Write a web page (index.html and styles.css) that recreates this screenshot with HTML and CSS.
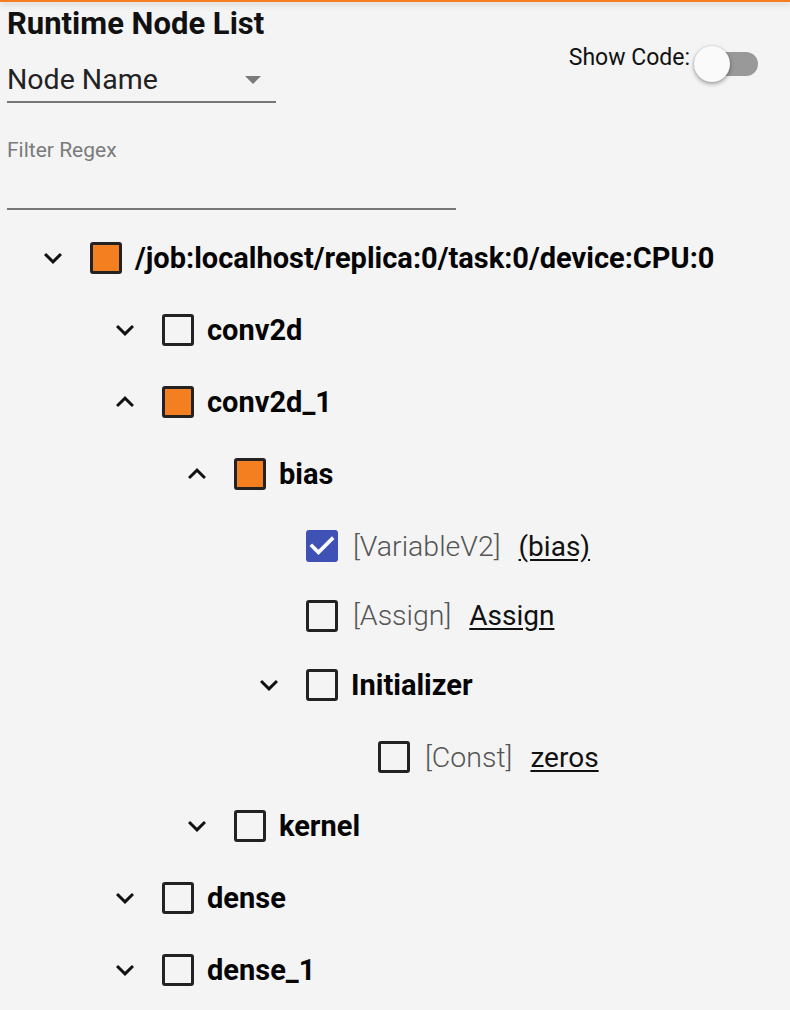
FILE: index.html
```html
<!DOCTYPE html>
<html lang="en">
<head>
<meta charset="utf-8">
<title>Runtime Node List</title>
<link rel="stylesheet" href="styles.css">
</head>
<body>
<div class="topbar"></div>
<main class="page">
  <section class="controls">
    <div class="left">
      <h1 class="title">Runtime Node List</h1>
      <div class="select">
        <span class="select-text">Node Name</span>
        <svg class="select-arrow" viewBox="7 10 10 5" width="18" height="8"><path d="M7 10l5 5 5-5z" fill="#7a7a7a"/></svg>
      </div>
      <label class="filter-label">Filter Regex</label>
      <div class="filter-input"></div>
    </div>
    <div class="right">
      <span class="show-code">Show Code:</span>
      <span class="toggle"><span class="track"></span><span class="knob"></span></span>
    </div>
  </section>

  <section class="tree">
    <div class="row parent d0">
      <svg class="chev" viewBox="0 0 24 24"><path d="M16.59 8.59L12 13.17 7.41 8.59 6 10l6 6 6-6z"/></svg>
      <span class="cb partial"></span>
      <span class="name">/job:localhost/replica:0/task:0/device:CPU:0</span>
    </div>
    <div class="row parent d1">
      <svg class="chev" viewBox="0 0 24 24"><path d="M16.59 8.59L12 13.17 7.41 8.59 6 10l6 6 6-6z"/></svg>
      <span class="cb"></span>
      <span class="name">conv2d</span>
    </div>
    <div class="row parent d1">
      <svg class="chev" viewBox="0 0 24 24"><path d="M12 8l-6 6 1.41 1.41L12 10.83l4.59 4.58L18 14z"/></svg>
      <span class="cb partial"></span>
      <span class="name">conv2d_1</span>
    </div>
    <div class="row parent d2">
      <svg class="chev" viewBox="0 0 24 24"><path d="M12 8l-6 6 1.41 1.41L12 10.83l4.59 4.58L18 14z"/></svg>
      <span class="cb partial"></span>
      <span class="name">bias</span>
    </div>
    <div class="row leaf d3">
      <span class="chev-space"></span>
      <span class="cb checked"><svg viewBox="3 3 18 18"><path d="M10 17l-5-5 1.41-1.41L10 14.17l7.59-7.59L19 8l-9 9z" fill="#fff"/></svg></span>
      <span class="type">[VariableV2]</span>
      <a class="link">(bias)</a>
    </div>
    <div class="row leaf d3">
      <span class="chev-space"></span>
      <span class="cb"></span>
      <span class="type">[Assign]</span>
      <a class="link">Assign</a>
    </div>
    <div class="row parent d3">
      <svg class="chev" viewBox="0 0 24 24"><path d="M16.59 8.59L12 13.17 7.41 8.59 6 10l6 6 6-6z"/></svg>
      <span class="cb"></span>
      <span class="name">Initializer</span>
    </div>
    <div class="row leaf d4">
      <span class="chev-space"></span>
      <span class="cb"></span>
      <span class="type">[Const]</span>
      <a class="link">zeros</a>
    </div>
    <div class="row parent d2">
      <svg class="chev" viewBox="0 0 24 24"><path d="M16.59 8.59L12 13.17 7.41 8.59 6 10l6 6 6-6z"/></svg>
      <span class="cb"></span>
      <span class="name">kernel</span>
    </div>
    <div class="row parent d1">
      <svg class="chev" viewBox="0 0 24 24"><path d="M16.59 8.59L12 13.17 7.41 8.59 6 10l6 6 6-6z"/></svg>
      <span class="cb"></span>
      <span class="name">dense</span>
    </div>
    <div class="row parent d1">
      <svg class="chev" viewBox="0 0 24 24"><path d="M16.59 8.59L12 13.17 7.41 8.59 6 10l6 6 6-6z"/></svg>
      <span class="cb"></span>
      <span class="name">dense_1</span>
    </div>
  </section>
</main>
</body>
</html>
```

FILE: styles.css
```css
* { box-sizing: border-box; }
html, body { margin: 0; padding: 0; }
body {
  background: #f4f4f4;
  font-family: Roboto, "Liberation Sans", sans-serif;
  color: #111;
  height: 1010px;
  overflow: hidden;
}
.topbar {
  height: 2px;
  background: #f57c1f;
  box-shadow: 0 2px 6px rgba(0,0,0,0.25);
  position: relative;
  z-index: 1;
}
.page { padding: 0 32px 0 7px; }

.controls { display: flex; justify-content: space-between; }
.left { display: flex; flex-direction: column; align-items: flex-start; }
.title {
  margin: 5px 0 0;
  font-size: 31px;
  line-height: 34px;
  font-weight: 700;
  color: #111;
}
.select {
  margin-top: 23px;
  width: 269px;
  display: flex;
  align-items: center;
  justify-content: space-between;
  padding: 0 14px 5px 0;
  border-bottom: 2px solid #777;
}
.select-text { font-size: 28.5px; line-height: 32px; color: #222; }
.select-arrow { display: block; }
.filter-label {
  margin-top: 35px;
  font-size: 21px;
  line-height: 24px;
  color: #7b7b7b;
}
.filter-input {
  width: 449px;
  height: 47.5px;
  border-bottom: 2px solid #777;
}

.right {
  display: flex;
  align-items: flex-start;
  margin-top: 44px;
  height: 38px;
}
.show-code { font-size: 23px; color: #111; margin: -2px 4px 0 0; }
.toggle { position: relative; display: block; width: 64px; height: 36px; }
.track {
  position: absolute;
  left: 6px; top: 6px;
  width: 58px; height: 24px;
  border-radius: 12px;
  background: #999;
}
.knob {
  position: absolute;
  left: 0; top: 0;
  width: 36px; height: 36px;
  border-radius: 50%;
  background: #fafafa;
  box-shadow: 0 2px 4px rgba(0,0,0,0.35), 0 0 2px rgba(0,0,0,0.15);
}

.tree { margin-top: 12px; }
.row { display: flex; align-items: center; }
.row.parent { height: 72px; }
.row.leaf { height: 69.5px; padding-top: 4px; }
.d0 { padding-left: 28px; }
.d1 { padding-left: 100px; }
.d2 { padding-left: 172px; }
.d3 { padding-left: 244px; }
.d4 { padding-left: 316px; }
.chev { width: 36px; height: 36px; fill: #111; margin-right: 19px; flex: none; }
.chev-space { width: 36px; height: 36px; margin-right: 19px; flex: none; }
.cb {
  width: 32px; height: 32px;
  border: 3px solid #222;
  border-radius: 3px;
  flex: none;
  display: block;
}
.cb.partial { background: #f47f20; }
.cb.checked { background: #3f51b5; border: none; }
.cb.checked svg { display: block; width: 32px; height: 32px; }
.name {
  margin-left: 13px;
  font-size: 29px;
  font-weight: 700;
  color: #050505;
}
.type {
  margin-left: 15px;
  font-size: 28.5px;
  font-weight: 300;
  color: #555;
}
.link {
  margin-left: 18px;
  font-size: 28px;
  color: #111;
  text-decoration: underline;
  text-underline-offset: 3px;
}
```
